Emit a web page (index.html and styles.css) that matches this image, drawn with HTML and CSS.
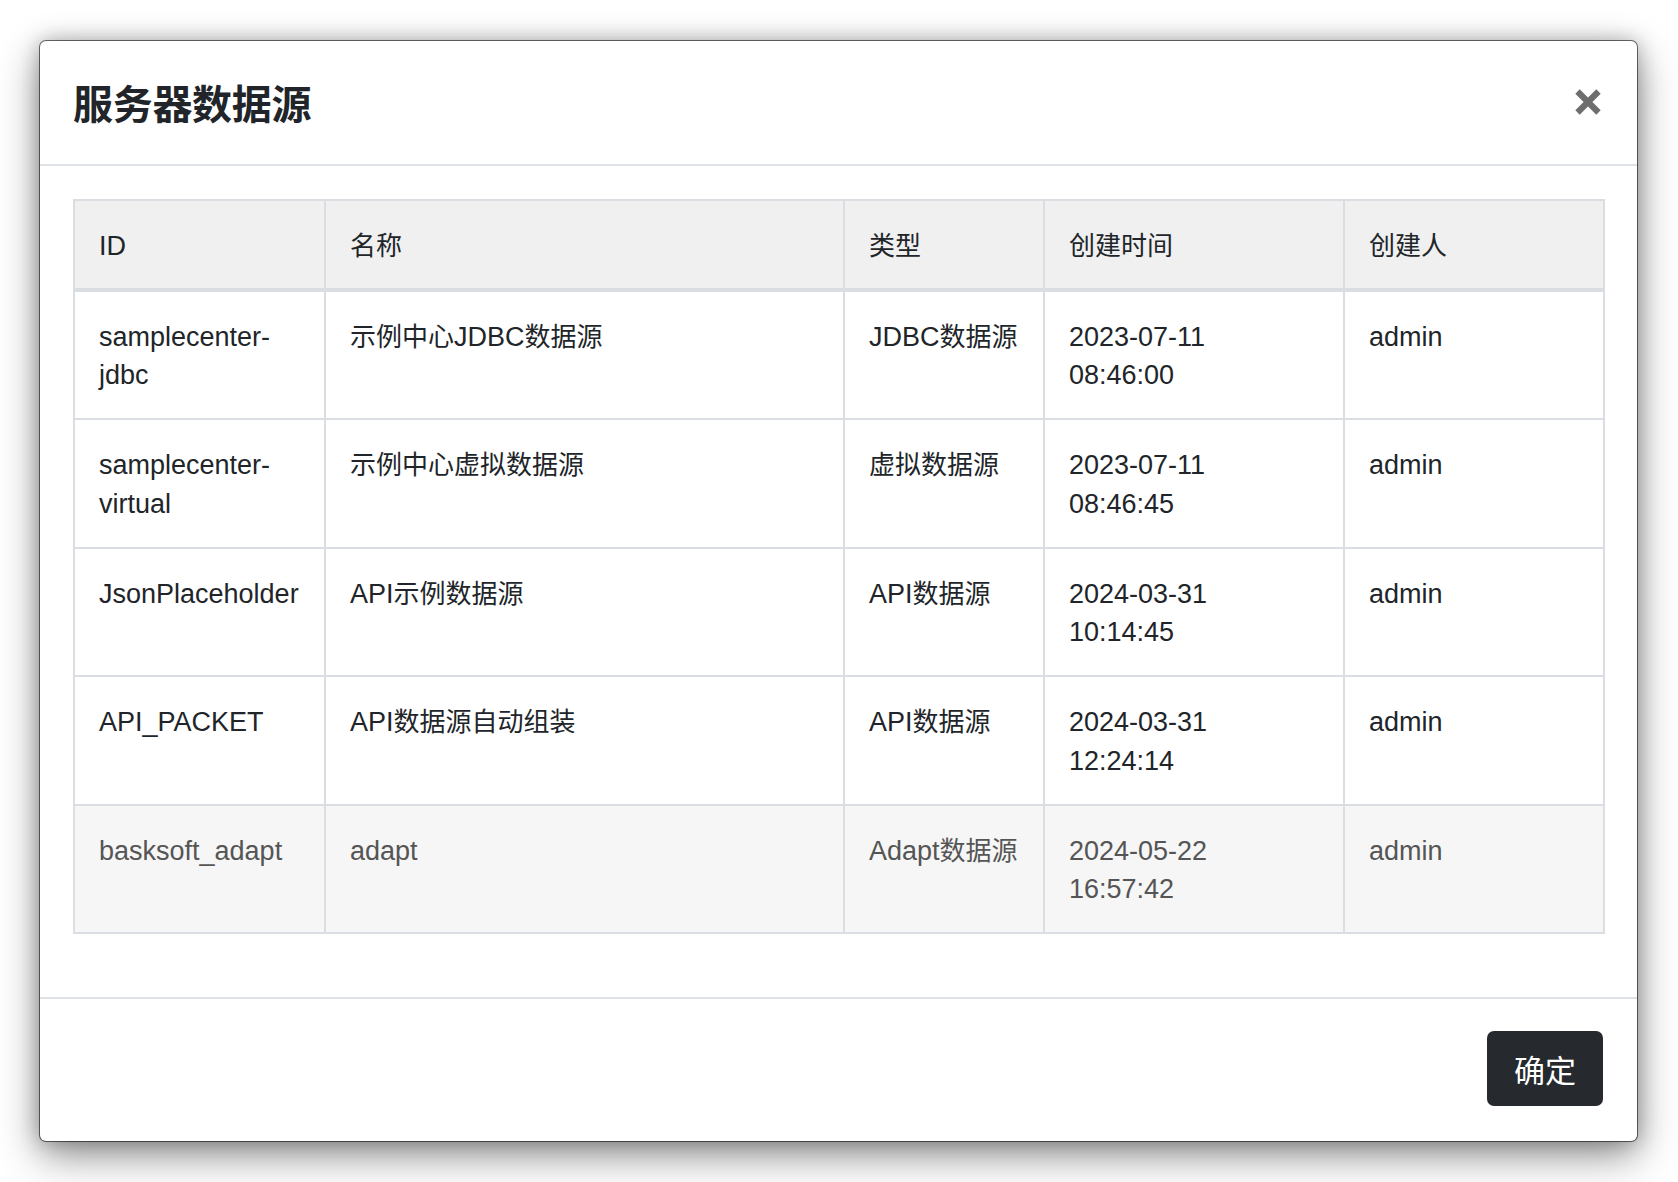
FILE: index.html
```html
<!DOCTYPE html>
<html lang="zh-CN">
<head>
<meta charset="utf-8">
<title>服务器数据源</title>
<link rel="stylesheet" href="styles.css">
</head>
<body>
<div class="modal">
  <div class="modal-header">
    <h4 class="modal-title">服务器数据源</h4>
    <button class="close" type="button" aria-label="Close">
      <svg width="28" height="28" viewBox="0 0 28 28"><path d="M3.5 3.5L24.5 24.5M24.5 3.5L3.5 24.5" stroke="#6e6e6e" stroke-width="6.2" stroke-linecap="butt"/></svg>
    </button>
  </div>
  <div class="modal-body">
    <table class="table">
      <colgroup>
        <col class="c1"><col class="c2"><col class="c3"><col class="c4"><col class="c5">
      </colgroup>
      <thead>
        <tr><th>ID</th><th><span class="zh">名称</span></th><th><span class="zh">类型</span></th><th><span class="zh">创建时间</span></th><th><span class="zh">创建人</span></th></tr>
      </thead>
      <tbody>
        <tr><td>samplecenter-jdbc</td><td><span class="zh">示例中心</span>JDBC<span class="zh">数据源</span></td><td class="nw">JDBC<span class="zh">数据源</span></td><td>2023-07-11<br>08:46:00</td><td>admin</td></tr>
        <tr><td>samplecenter-virtual</td><td><span class="zh">示例中心虚拟数据源</span></td><td class="nw"><span class="zh">虚拟数据源</span></td><td>2023-07-11<br>08:46:45</td><td>admin</td></tr>
        <tr><td>JsonPlaceholder</td><td>API<span class="zh">示例数据源</span></td><td class="nw">API<span class="zh">数据源</span></td><td>2024-03-31<br>10:14:45</td><td>admin</td></tr>
        <tr><td>API_PACKET</td><td>API<span class="zh">数据源自动组装</span></td><td class="nw">API<span class="zh">数据源</span></td><td>2024-03-31<br>12:24:14</td><td>admin</td></tr>
        <tr class="hover"><td>basksoft_adapt</td><td>adapt</td><td class="nw">Adapt<span class="zh">数据源</span></td><td>2024-05-22<br>16:57:42</td><td>admin</td></tr>
      </tbody>
    </table>
  </div>
  <div class="modal-footer">
    <button class="btn" type="button">确定</button>
  </div>
</div>
</body>
</html>
```
FILE: styles.css
```css
* { box-sizing: border-box; }
html, body { margin: 0; background: #ffffff; }
body {
  padding: 41px 41px 41px 40px;
  font-family: "Liberation Sans", "Noto Sans CJK SC", sans-serif;
  color: #212529;
}
.modal {
  background: #fff;
  border-radius: 6px;
  box-shadow: 0 0 0 1px rgba(0,0,0,0.55), 0 14px 40px rgba(0,0,0,0.45), 0 0 20px rgba(0,0,0,0.25);
  display: flex;
  flex-direction: column;
  height: 1100px;
}
.modal-header {
  height: 125px;
  border-bottom: 2px solid #dee2e6;
  display: flex;
  align-items: center;
  justify-content: space-between;
  padding: 0 34px 0 33px;
}
.modal-title {
  margin: 0;
  font-family: "Noto Sans CJK SC", sans-serif;
  font-weight: 700;
  font-size: 40px;
  line-height: 1.1;
  color: #212529;
  letter-spacing: -0.3px;
  position: relative;
  top: -1px;
}
.close {
  background: none;
  border: 0;
  padding: 0;
  width: 28px;
  height: 28px;
  display: flex;
  position: relative;
  top: -1px;
  left: -1px;
}
.modal-body {
  flex: 1;
  padding: 33px 33px 0 33px;
}
.table {
  width: 1530px;
  table-layout: fixed;
  border-collapse: collapse;
  border: 2px solid #dadee2;
  font-size: 27px;
  line-height: 38.5px;
}
.zh { font-size: 26px; }
.c1 { width: 251px; }
.c2 { width: 519px; }
.c3 { width: 200px; }
.c4 { width: 300px; }
.c5 { width: 260px; }
.table th, .table td {
  border: 2px solid #dadee2;
  padding: 26px 24px 23.5px 24px;
  text-align: left;
  vertical-align: top;
  font-weight: 400;
}
.table th {
  background: #f0f0f0;
  border-bottom-width: 4px;
  padding-top: 26px;
  padding-bottom: 22px;
}
.table td.nw { white-space: nowrap; }
.table tr.hover td {
  background: #f6f6f6;
  color: #555;
}
.modal-footer {
  border-top: 2px solid #dee2e6;
  display: flex;
  justify-content: flex-end;
  padding: 32px 34px 35px 33px;
}
.btn {
  background: #262a2e;
  color: #fff;
  border: 0;
  border-radius: 7px;
  font-family: "Noto Sans CJK SC", sans-serif;
  font-size: 31px;
  line-height: 47px;
  padding: 14px 26px;
  height: 75px;
  width: 116px;
}
```
